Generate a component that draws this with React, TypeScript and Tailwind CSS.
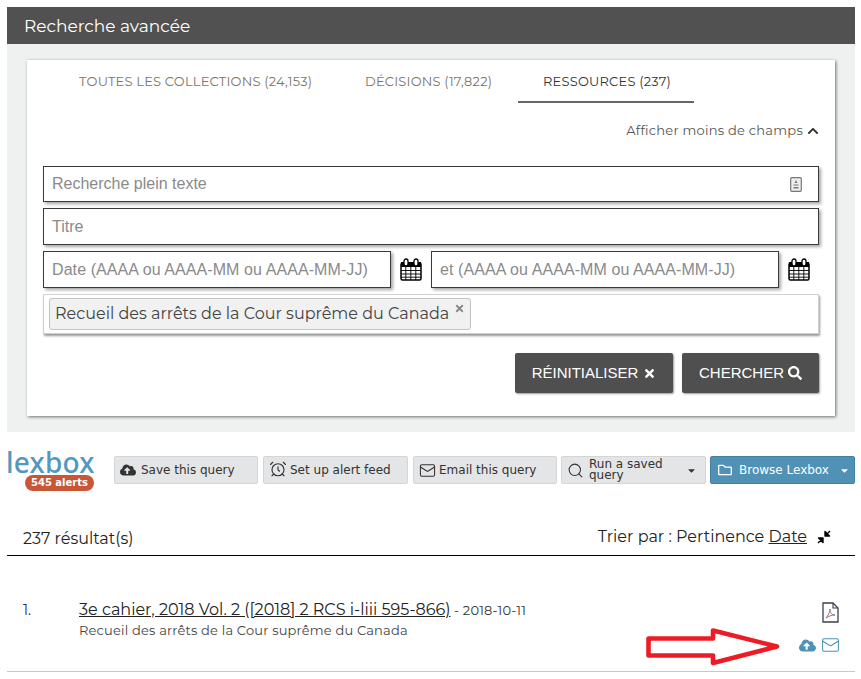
import React from "react";
import { FaTimes, FaSearch, FaChevronUp, FaCloudUploadAlt, FaRegFolder, FaCaretDown } from "react-icons/fa";
import { LuAlarmClock, LuSearch, LuMail } from "react-icons/lu";

const mont = "font-['Montserrat','Inter','Noto_Sans',sans-serif]";

function Calendar() {
  return (
    <svg width="22" height="23" viewBox="0 0 22 23" className="shrink-0">
      <rect x="1" y="5" width="20" height="17" rx="1.5" fill="#fff" stroke="#000" strokeWidth="1.5" />
      <rect x="1" y="4" width="20" height="5" fill="#000" />
      <rect x="4" y="1" width="4" height="7" rx="2" fill="#fff" stroke="#000" strokeWidth="1.3" />
      <rect x="14" y="1" width="4" height="7" rx="2" fill="#fff" stroke="#000" strokeWidth="1.3" />
      <path d="M1 12.5H21M1 16H21M1 19.2H21M5.8 9V22M10.8 9V22M15.8 9V22" stroke="#000" strokeWidth="0.9" fill="none" />
    </svg>
  );
}

function Field({ text, className = "", children }: { text: string; className?: string; children?: React.ReactNode }) {
  return (
    <div className={`flex items-center justify-between border border-[#3a3a3a] bg-white pl-[8px] pr-[16px] shadow-[2px_2px_3px_rgba(0,0,0,0.35)] font-['Liberation_Sans',sans-serif] text-[16px] text-[#8a8a8a] ${className}`}>
      <span className="whitespace-nowrap">{text}</span>
      {children}
    </div>
  );
}

function ToolButton({ icon, children, className = "" }: { icon: React.ReactNode; children: React.ReactNode; className?: string }) {
  return (
    <div className={`flex h-[28px] items-center rounded-[2px] border border-[#d4d5d7] bg-[#e4e5e7] pl-[5px] font-['DejaVu_Sans',sans-serif] text-[12px] text-[#333] ${className}`}>
      {icon}
      {children}
    </div>
  );
}

export default function App() {
  return (
    <div className="relative h-[679px] w-[861px] overflow-hidden bg-white pl-[7px] pr-[6px] pt-[7px]">
      <div className={`flex h-[37px] items-center bg-[#515151] pl-[17px] pt-[2px] text-[17px] text-white ${mont}`}>Recherche avancée</div>

      <div className="h-[388px] bg-[#eff0f0] px-[20px] pt-[16px]">
        <div className={`h-[356px] bg-white px-[16px] shadow-[1px_1px_3px_rgba(0,0,0,0.55)] ${mont}`}>
          <div className="flex h-[43px] text-[13px] leading-[43px] tracking-[0.2px]">
            <div className="ml-[36px] w-[286px] whitespace-nowrap text-[#7d7468]">TOUTES LES COLLECTIONS (24,153)</div>
            <div className="w-[153px] whitespace-nowrap text-[#7d7468]">DÉCISIONS (17,822)</div>
            <div className="w-[176px] whitespace-nowrap border-b-2 border-[#666] pl-[25px] text-[#333]">RESSOURCES (237)</div>
          </div>
          <div className="flex h-[63px] items-start justify-end gap-[4px] pt-[19px] text-[13px] leading-[16px] tracking-[0.25px] text-[#555]">
            <span>Afficher moins de champs</span>
            <FaChevronUp className="mt-[3px] h-[12px] w-[12px] text-[#333]" />
          </div>

          <div className="flex flex-col gap-[6px]">
            <Field text="Recherche plein texte" className="h-[36px]">
              <svg width="12" height="15" viewBox="0 0 12 15">
                <rect x="0.7" y="0.7" width="10.6" height="13.6" rx="1" fill="#eee" stroke="#777" strokeWidth="1.2" />
                <path d="M6 3l1.5 3h-3zM3.5 7.5h5v1h-5zM3.5 10h5v1.5h-5z" fill="#777" />
              </svg>
            </Field>
            <Field text="Titre" className="h-[37px]" />
            <div className="flex h-[37px] items-center">
              <Field text="Date (AAAA ou AAAA-MM ou AAAA-MM-JJ)" className="h-[37px] w-[348px] tracking-[0.08px]" />
              <div className="flex w-[40px] justify-center"><Calendar /></div>
              <Field text="et (AAAA ou AAAA-MM ou AAAA-MM-JJ)" className="h-[37px] w-[348px] tracking-[0.08px]" />
              <div className="flex w-[40px] justify-center"><Calendar /></div>
            </div>
            <div className="h-[40px] border border-[#d0d0d0] bg-white p-[3px] pl-[5px] shadow-[1px_2px_2px_rgba(0,0,0,0.4)]">
              <div className="relative flex h-[32px] w-[422px] items-center rounded-[3px] border border-[#c4c4c4] bg-[#f1f1f1] pl-[5px] text-[16px] text-[#444]">
                <span className="whitespace-nowrap">Recueil des arrêts de la Cour suprême du Canada</span>
                <FaTimes className="absolute right-[5px] top-[4px] h-[11px] w-[11px] text-[#888]" />
              </div>
            </div>
          </div>

          <div className="mt-[19px] flex justify-end gap-[9px] font-['Liberation_Sans',sans-serif] text-[15px] text-white">
            <div className="flex h-[40px] w-[158px] items-center justify-center gap-[5px] rounded-[2px] bg-[#4f4f4f] shadow-[1px_1px_2px_rgba(0,0,0,0.4)]">
              RÉINITIALISER <FaTimes className="h-[13px] w-[13px]" />
            </div>
            <div className="flex h-[40px] w-[137px] items-center justify-center gap-[4px] rounded-[2px] bg-[#4f4f4f] shadow-[1px_1px_2px_rgba(0,0,0,0.4)]">
              CHERCHER <FaSearch className="h-[14px] w-[14px]" />
            </div>
          </div>
        </div>
      </div>

      <div className="mt-[18px] flex h-[42px] items-start">
        <div className="relative h-[42px] w-[107px]">
          <div className="-ml-[1px] font-['Noto_Sans',sans-serif] text-[28px] font-medium leading-[24px] tracking-[0.2px] text-[#5298bc]">lexbox</div>
          <div className="absolute left-[18px] top-[25px] flex h-[16px] w-[69px] items-center justify-center rounded-[8px] bg-[#c95636] font-['DejaVu_Sans',sans-serif] text-[10px] font-bold leading-[16px] text-white">545 alerts</div>
        </div>
        <div className="mt-[6px] flex gap-[5px]">
          <ToolButton className="w-[144px]" icon={<FaCloudUploadAlt className="mr-[5px] h-[16px] w-[16px] text-[#333]" />}>Save this query</ToolButton>
          <ToolButton className="w-[145px]" icon={<LuAlarmClock className="mr-[3px] -mt-[2px] h-[18px] w-[18px] text-[#333]" strokeWidth={1.5} />}>Set up alert feed</ToolButton>
          <ToolButton className="w-[144px]" icon={<LuMail className="mr-[3px] h-[17px] w-[17px] text-[#333]" strokeWidth={1.5} />}>Email this query</ToolButton>
          <ToolButton className="-ml-[1px] w-[145px] pr-[5px] leading-[11px]" icon={<LuSearch className="mr-[5px] h-[17px] w-[17px] shrink-0 text-[#333]" strokeWidth={1.5} />}>
            <span className="w-[96px]">Run a saved query</span>
            <FaCaretDown className="ml-auto mr-[3px] h-[11px] w-[11px] text-[#333]" />
          </ToolButton>
          <div className="-ml-[1px] flex h-[28px] w-[145px] items-center rounded-[2px] border border-[#457f9f] bg-[#4f92b6] pl-[7px] font-['DejaVu_Sans',sans-serif] text-[12px] font-medium text-white">
            <FaRegFolder className="mr-[7px] h-[14px] w-[14px]" />
            Browse Lexbox
            <FaCaretDown className="ml-auto mr-[4px] h-[11px] w-[11px]" />
          </div>
        </div>
      </div>

      <div className={`mt-[22px] flex h-[42px] items-center justify-between border-b border-black pb-[1px] pl-[16px] pr-[24px] pt-[10px] text-[16px] text-[#222] ${mont}`}>
        <span>237 résultat(s)</span>
        <span className="-mt-[4px] flex items-center">
          Trier par : Pertinence&nbsp;<span className="underline">Date</span>
          <svg width="14" height="14" viewBox="0 0 14 14" className="ml-[10px]">
            <path d="M13 1L9 5M8 1.5V6H12.5Z" fill="#000" stroke="#000" strokeWidth="1.4" strokeLinejoin="round" />
            <path d="M1 13L5 9M6 12.5V8H1.5Z" fill="#000" stroke="#000" strokeWidth="1.4" strokeLinejoin="round" />
          </svg>
        </span>
      </div>

      <div className={`relative flex h-[116px] border-b border-[#c8c8c8] pl-[16px] pt-[44px] ${mont}`}>
        <div className="w-[56px] text-[14px] leading-[20px] text-[#2a1a5e]">1.</div>
        <div>
          <div className="whitespace-nowrap leading-[20px]">
            <span className="text-[16px] text-[#222] underline">3e cahier, 2018 Vol. 2 ([2018] 2 RCS i-liii 595-866)</span>
            <span className="text-[13px] tracking-[0.2px] text-[#333]"> - 2018-10-11</span>
          </div>
          <div className="text-[13px] leading-[20px] tracking-[0.18px] text-[#444]">Recueil des arrêts de la Cour suprême du Canada</div>
        </div>
        <svg width="17" height="21" viewBox="0 0 17 21" className="absolute right-[16px] top-[46px]">
          <path d="M1 1H11L16 6V20H1Z" fill="none" stroke="#3f3f4f" strokeWidth="1.3" />
          <path d="M11 1V6H16" fill="none" stroke="#3f3f4f" strokeWidth="1.1" />
          <path d="M4 16C6 14 8 10 8 7C8 11 10 13 13 13C10 13 7 14 4 16Z" fill="none" stroke="#8a6a70" strokeWidth="0.9" />
        </svg>
        <div className="absolute right-[15px] top-[79px] flex items-center gap-[5px] text-[#4f92b6]">
          <FaCloudUploadAlt className="h-[17px] w-[17px]" />
          <LuMail className="h-[20px] w-[19px]" strokeWidth={1.3} />
        </div>
      </div>

      <svg width="145" height="50" viewBox="0 0 145 50" className="absolute left-[640px] top-[622px]">
        <path d="M8.5 16.5H73V8.5L137 24.5L73 41V33.5H8.5Z" fill="none" stroke="#ed1c24" strokeWidth="4.6" strokeLinejoin="round" />
      </svg>
    </div>
  );
}
